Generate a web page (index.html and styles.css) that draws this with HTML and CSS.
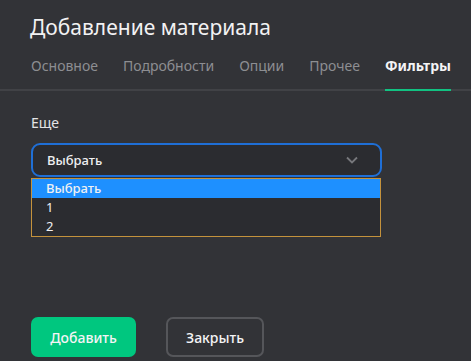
FILE: index.html
```html
<!DOCTYPE html>
<html lang="ru">
<head>
    <meta charset="UTF-8">
    <meta name="viewport" content="width=device-width, initial-scale=1.0">
    <title>Добавление материала</title>
    <link rel="stylesheet" href="styles.css">
</head>
<body>

    <div class="modal">
        <h2 class="modal-title">Добавление материала</h2>

        <div class="tabs">
            <div class="tab">Основное</div>
            <div class="tab">Подробности</div>
            <div class="tab">Опции</div>
            <div class="tab">Прочее</div>
            <div class="tab active">Фильтры</div>
        </div>

        <div class="modal-body">
            <div class="field">
                <label class="field-label">Еще</label>
                <div class="select">
                    <span>Выбрать</span>
                    <svg class="chevron" width="12" height="8" viewBox="0 0 12 8">
                        <path d="M1 1.5l5 5 5-5" fill="none" stroke="#77787c" stroke-width="1.8"/>
                    </svg>
                </div>
                <ul class="options">
                    <li class="option selected">Выбрать</li>
                    <li class="option">1</li>
                    <li class="option">2</li>
                </ul>
            </div>
        </div>

        <div class="actions">
            <button class="btn btn-primary">Добавить</button>
            <button class="btn btn-outline">Закрыть</button>
        </div>
    </div>

</body>
</html>
```

FILE: styles.css
```css
body {
    margin: 0;
    background-color: #323337;
    font-family: "Noto Sans", "Open Sans", sans-serif;
    color: #e6e6e8;
}
.modal {
    width: 471px;
    height: 361px;
    display: flex;
    flex-direction: column;
}
.modal-title {
    margin: 12px 0 0 30px;
    font-size: 21px;
    font-weight: 400;
    line-height: 30px;
    color: #f2f2f3;
}
.tabs {
    display: flex;
    gap: 25px;
    margin-top: 14px;
    padding: 0 31px;
    border-bottom: 2px solid #414246;
}
.tab {
    font-size: 14px;
    line-height: 20px;
    padding-bottom: 13px;
    margin-bottom: -2px;
    color: #8d8e92;
    border-bottom: 2px solid transparent;
}
.tab.active {
    color: #f4f4f5;
    font-weight: 700;
    border-bottom-color: #12c282;
}
.modal-body {
    padding: 22px 31px 0;
}
.field {
    position: relative;
    width: 351px;
}
.field-label {
    display: block;
    font-size: 14px;
    line-height: 20px;
    color: #e4e4e6;
    margin-bottom: 10px;
}
.select {
    height: 30px;
    display: flex;
    align-items: center;
    justify-content: space-between;
    padding: 0 22px 0 14px;
    border: 2px solid #1f6fd6;
    border-radius: 9px;
    background-color: #2b2c30;
    font-size: 13px;
    font-weight: 500;
    color: #f0f0f2;
}
.options {
    position: absolute;
    left: 0;
    top: 65px;
    width: 348px;
    margin: 0;
    padding: 0;
    list-style: none;
    background-color: #2b2c30;
    border: 1px solid #c4923c;
}
.option {
    height: 19px;
    line-height: 19px;
    padding-left: 14px;
    font-size: 13px;
    color: #f0f0f2;
}
.option.selected {
    background-color: #1e90ff;
    font-weight: 500;
}
.actions {
    display: flex;
    gap: 30px;
    margin-top: auto;
    padding: 0 31px 4px;
}
.btn {
    height: 40px;
    border-radius: 7px;
    font-family: inherit;
    font-size: 14px;
    font-weight: 500;
    color: #f4f4f5;
    cursor: pointer;
}
.btn-primary {
    width: 105px;
    border: none;
    background-color: #00c77f;
}
.btn-outline {
    width: 98px;
    border: 2px solid #55565a;
    background-color: transparent;
}
```
